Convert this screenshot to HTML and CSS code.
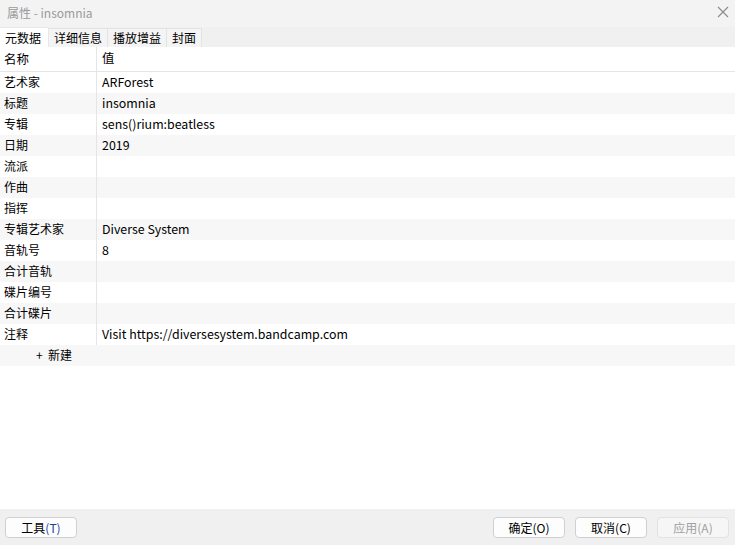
FILE: index.html
```html
<!DOCTYPE html>
<html lang="zh-CN">
<head>
    <meta charset="UTF-8">
    <title>属性 - insomnia</title>
    <link rel="stylesheet" href="styles.css">
</head>
<body>
    <div class="window">
        <div class="titlebar">
            <span class="title">属性 - insomnia</span>
            <span class="close">
                <svg width="12" height="12" viewBox="0 0 12 12"><path d="M1 1L11 11M11 1L1 11" stroke="#8a8a8a" stroke-width="1.1"/></svg>
            </span>
        </div>

        <div class="tabs">
            <div class="tab active">元数据</div>
            <div class="tab">详细信息</div>
            <div class="tab">播放增益</div>
            <div class="tab">封面</div>
        </div>

        <div class="content">
            <div class="grid">
                <div class="row head"><div class="key">名称</div><div class="val">值</div></div>
                <div class="row"><div class="key">艺术家</div><div class="val">ARForest</div></div>
                <div class="row alt"><div class="key">标题</div><div class="val">insomnia</div></div>
                <div class="row"><div class="key">专辑</div><div class="val">sens()rium:beatless</div></div>
                <div class="row alt"><div class="key">日期</div><div class="val">2019</div></div>
                <div class="row"><div class="key">流派</div><div class="val"></div></div>
                <div class="row alt"><div class="key">作曲</div><div class="val"></div></div>
                <div class="row"><div class="key">指挥</div><div class="val"></div></div>
                <div class="row alt"><div class="key">专辑艺术家</div><div class="val">Diverse System</div></div>
                <div class="row"><div class="key">音轨号</div><div class="val">8</div></div>
                <div class="row alt"><div class="key">合计音轨</div><div class="val"></div></div>
                <div class="row"><div class="key">碟片编号</div><div class="val"></div></div>
                <div class="row alt"><div class="key">合计碟片</div><div class="val"></div></div>
                <div class="row"><div class="key">注释</div><div class="val">Visit https://diversesystem.bandcamp.com</div></div>
                <div class="row alt add"><div class="key">+&nbsp; 新建</div></div>
            </div>
        </div>

        <div class="footer">
            <button class="btn">工具<span class="acc">(T)</span></button>
            <div class="spacer"></div>
            <button class="btn">确定(O)</button>
            <button class="btn">取消(C)</button>
            <button class="btn disabled">应用(A)</button>
        </div>
    </div>
</body>
</html>
```

FILE: styles.css
```css
* {
    box-sizing: border-box;
}

body {
    margin: 0;
    font-family: "Noto Sans CJK SC", "Noto Sans", sans-serif;
    font-size: 12px;
    color: #000;
    background-color: #fff;
}

.window {
    width: 735px;
    height: 545px;
    display: flex;
    flex-direction: column;
}

.titlebar {
    height: 27px;
    background-color: #f3f3f3;
    display: flex;
    align-items: center;
    justify-content: space-between;
    padding: 0 7px 3px 7px;
}

.title {
    color: #9a9a9a;
    font-size: 12px;
}

.close {
    display: flex;
    margin-right: -1px;
}

.tabs {
    height: 20px;
    background-color: #f0f0f0;
    display: flex;
    align-items: flex-end;
}

.tab {
    height: 19px;
    padding: 0 5px;
    line-height: 18px;
    font-size: 12px;
    border: 1px solid #e3e3e3;
    border-bottom: none;
    border-left: none;
    background-color: #f4f4f4;
}

.tab.active {
    height: 20px;
    background-color: #fff;
    border-color: #e8e8e8;
    padding: 0 7px 0 5px;
    line-height: 19px;
}

.content {
    flex: 1;
    background-color: #fff;
}

.row {
    display: flex;
    height: 21px;
    line-height: 20px;
}

.row.alt {
    background-color: #f7f7f7;
}

.row.head {
    height: 25px;
    line-height: 23px;
    border-bottom: 1px solid #e5e5e5;
    font-size: 12.5px;
}

.key {
    width: 97px;
    padding-left: 4px;
    border-right: 1px solid #e5e5e5;
    white-space: nowrap;
}

.val {
    flex: 1;
    padding-left: 5px;
    white-space: nowrap;
    font-size: 12.4px;
}

.row.add .key {
    border-right: none;
    padding-left: 36px;
}

.footer {
    height: 36px;
    background-color: #f0f0f0;
    display: flex;
    align-items: center;
    padding: 0 6px 0 5px;
    gap: 10px;
}

.spacer {
    flex: 1;
}

.btn {
    width: 72px;
    height: 21px;
    padding: 0;
    font-family: inherit;
    font-size: 12px;
    background-color: #fdfdfd;
    border: 1px solid #d0d0d0;
    border-radius: 4px;
    color: #000;
}

.btn .acc {
    color: #1a3fa0;
}

.btn.disabled {
    color: #a0a0a0;
    background-color: #f6f6f6;
    border-color: #e2e2e2;
}
```
